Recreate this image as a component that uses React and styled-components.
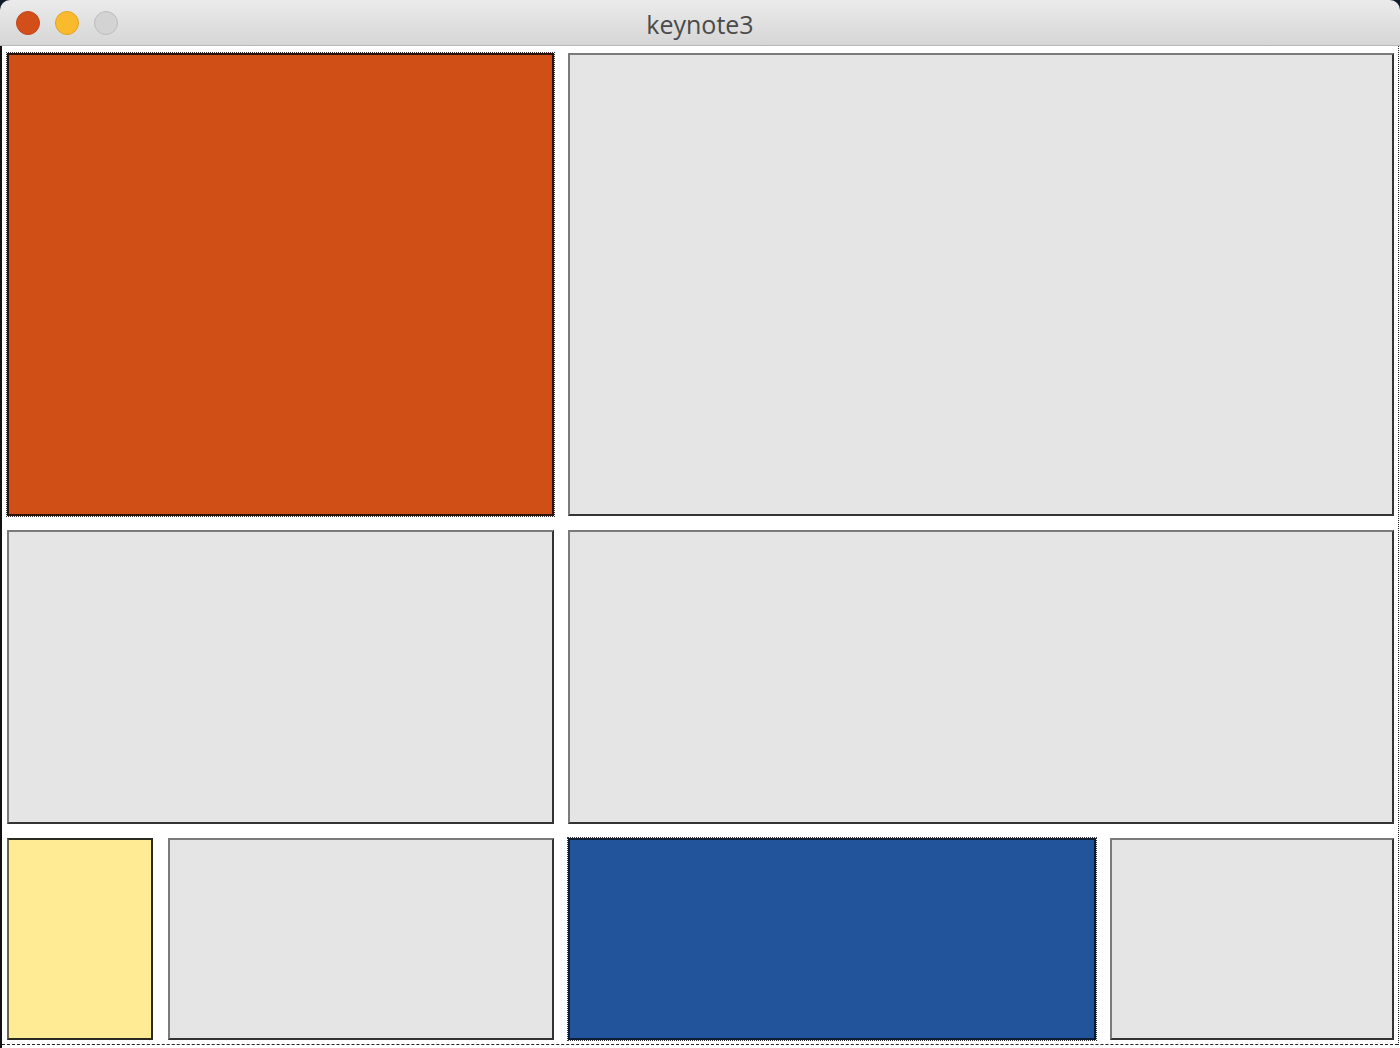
import React from "react";
import styled, { createGlobalStyle, css } from "styled-components";

const Global = createGlobalStyle`
  html, body { margin: 0; padding: 0; background: #0d1b2b; }
  body { width: 1400px; height: 1048px; overflow: hidden; font-family: "Open Sans", "Liberation Sans", sans-serif; }
`;

const Window = styled.div`
  width: 1400px;
  height: 1048px;
  display: flex;
  flex-direction: column;
  background: #0d1b2b;
`;

const TitleBar = styled.div`
  height: 45px;
  flex: none;
  border-radius: 10px 10px 0 0;
  background: linear-gradient(#ebebeb, #d6d6d6);
  border-bottom: 1px solid #b8b8b8;
  display: flex;
  align-items: center;
  position: relative;
  padding-left: 16px;
  gap: 15px;
`;

const Light = styled.span`
  width: 24px;
  height: 24px;
  margin-top: 1px;
  border-radius: 50%;
  box-sizing: border-box;
  background: ${(p) => p.$color};
  border: 1px solid ${(p) => p.$edge};
`;

const Title = styled.div`
  position: absolute;
  left: 0;
  right: 0;
  top: 3px;
  bottom: 0;
  display: flex;
  align-items: center;
  justify-content: center;
  font-size: 25px;
  color: #4a4a4a;
  pointer-events: none;
`;

const Content = styled.div`
  flex: 1;
  background: #ffffff;
  border-left: 2px solid #111;
  box-sizing: border-box;
  padding: 7px 0 0 5px;
  position: relative;
  &::after {
    content: "";
    position: absolute;
    right: 1px;
    top: 0;
    bottom: 3px;
    border-right: 1px dotted #222;
  }
  &::before {
    content: "";
    position: absolute;
    left: 0;
    right: 2px;
    bottom: 3px;
    border-bottom: 1px dashed #222;
  }
`;

const Grid = styled.div`
  display: grid;
  grid-template-columns: 547px 826px;
  grid-template-rows: 463px 294px 202px;
  column-gap: 14px;
  row-gap: 14px;
`;

const Row = styled.div`
  display: flex;
  gap: ${(p) => p.$gap || 14}px;
`;

const fills = {
  gray: css`
    background: #e5e5e5;
    border-style: solid;
    border-width: 2px;
    border-color: #7b7b7b #333 #333 #7b7b7b;
  `,
  orange: css`
    background: #d04f16;
    border: 2px solid #2a140a;
    outline: 1px dotted #333;
  `,
  yellow: css`
    background: #ffeb94;
    border: 2px solid #2b2a22;
    border-left-color: #6b6447;
  `,
  blue: css`
    background: #21549b;
    border: 2px solid #0c1c33;
    outline: 1px dotted #333;
  `,
};

const Panel = styled.div`
  box-sizing: border-box;
  ${(p) => fills[p.$kind]}
  ${(p) => (p.$w ? `width: ${p.$w}px; flex: none;` : "")}
  height: 100%;
`;

export default function App() {
  return (
    <>
      <Global />
      <Window>
        <TitleBar>
          <Light $color="#d24f1a" $edge="#c2451a" />
          <Light $color="#f9bb2d" $edge="#e0a322" />
          <Light $color="#d3d3d3" $edge="#bcbcbc" />
          <Title>keynote3</Title>
        </TitleBar>
        <Content>
          <Grid>
            <Panel $kind="orange" />
            <Panel $kind="gray" />
            <Panel $kind="gray" />
            <Panel $kind="gray" />
            <Row $gap={15}>
              <Panel $kind="yellow" $w={146} />
              <Panel $kind="gray" $w={386} />
            </Row>
            <Row>
              <Panel $kind="blue" $w={528} />
              <Panel $kind="gray" $w={284} />
            </Row>
          </Grid>
        </Content>
      </Window>
    </>
  );
}
